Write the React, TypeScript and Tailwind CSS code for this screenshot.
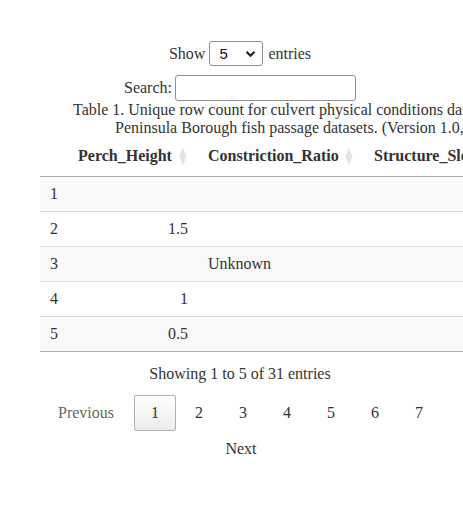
import React from "react";

const SortIcon = () => (
  <svg width="8" height="19" viewBox="0 0 8 19" className="shrink-0">
    <path d="M4 0.5 L7.5 9.5 L4 18.5 L0.5 9.5 Z" fill="#e4e4e4" />
  </svg>
);

const rows: { i: string; ph: string; cr: string }[] = [
  { i: "1", ph: "", cr: "" },
  { i: "2", ph: "1.5", cr: "" },
  { i: "3", ph: "", cr: "Unknown" },
  { i: "4", ph: "1", cr: "" },
  { i: "5", ph: "0.5", cr: "" },
];

export default function App() {
  return (
    <div
      className="w-full h-[506px] overflow-hidden bg-white text-[16px] text-[#333] leading-[18px]"
      style={{ fontFamily: '"Liberation Serif", "Times New Roman", serif' }}
    >
      <div className="w-[440px] ml-[20px]">
        {/* Show entries */}
        <div className="mt-[41px] h-[25px] flex items-center justify-center">
          <span>Show</span>
          <div className="ml-[4px] w-[54px] h-[25px] border border-[#8f8f8f] rounded-[3px] flex items-center justify-between pl-[9px] pr-[6px]">
            <span
              className="text-[15px] text-[#111]"
              style={{ fontFamily: '"Liberation Sans", Arial, sans-serif' }}
            >
              5
            </span>
            <svg width="11" height="8" viewBox="0 0 11 8">
              <path d="M1.5 1.8 L5.5 5.8 L9.5 1.8" stroke="#222" strokeWidth="2.2" fill="none" />
            </svg>
          </div>
          <span className="ml-[5px]">entries</span>
        </div>
        {/* Search */}
        <div className="mt-[9px] h-[26px] flex items-center justify-center">
          <span>Search:</span>
          <div className="ml-[3px] w-[181px] h-[26px] border border-[#8f8f8f] rounded-[3px] bg-white" />
        </div>
      </div>
      {/* Caption */}
      <div className="whitespace-nowrap">
        <div className="ml-[73px] h-[18px]">
          Table 1. Unique row count for culvert physical conditions data from the Kenai
        </div>
        <div className="ml-[115px] h-[18px]">
          Peninsula Borough fish passage datasets. (Version 1.0, 2023)
        </div>
      </div>
      {/* Table */}
      <div className="pl-[40px] whitespace-nowrap">
        <table className="border-collapse table-fixed w-[700px]">
          <colgroup>
            <col className="w-[28px]" />
            <col className="w-[130px]" />
            <col className="w-[166px]" />
            <col className="w-[190px]" />
            <col className="w-[186px]" />
          </colgroup>
          <thead>
            <tr className="border-b border-[#aaaaaa]">
              <th className="h-[39px] p-0"></th>
              <th className="h-[39px] pl-[10px] pr-[11px] text-left font-bold">
                <div className="flex items-center justify-between">
                  <span>Perch_Height</span>
                  <SortIcon />
                </div>
              </th>
              <th className="h-[39px] pl-[10px] pr-[11px] text-left font-bold">
                <div className="flex items-center justify-between">
                  <span>Constriction_Ratio</span>
                  <SortIcon />
                </div>
              </th>
              <th className="h-[39px] pl-[10px] pr-[11px] text-left font-bold">
                <div className="flex items-center justify-between">
                  <span>Structure_Slope</span>
                  <SortIcon />
                </div>
              </th>
              <th className="h-[39px] pl-[10px] pr-[11px] text-left font-bold">
                <div className="flex items-center justify-between">
                  <span>Structure_Length</span>
                  <SortIcon />
                </div>
              </th>
            </tr>
          </thead>
          <tbody>
            {rows.map((r, idx) => (
              <tr
                key={r.i}
                className={
                  (idx % 2 === 0 ? "bg-[#f9f9f9] " : "bg-white ") +
                  (idx === rows.length - 1 ? "border-b border-[#b5b5b5]" : "border-b border-[#dddddd]")
                }
              >
                <td className="h-[35px] pl-[10px] p-0">{r.i}</td>
                <td className="h-[35px] px-[10px] text-right">{r.ph}</td>
                <td className="h-[35px] px-[10px] text-left">{r.cr}</td>
                <td className="h-[35px] px-[10px]"></td>
                <td className="h-[35px] px-[10px]"></td>
              </tr>
            ))}
          </tbody>
        </table>
      </div>
      {/* Info and pagination */}
      <div className="w-[440px] ml-[20px]">
        <div className="mt-[13px] text-center h-[18px]">Showing 1 to 5 of 31 entries</div>
      </div>
      <div className="w-[440px] ml-[21px]">
        <div className="mt-[12px] flex flex-wrap justify-center gap-x-[2px]">
          <span className="h-[36px] pl-[16px] pr-[18px] flex items-center text-[#666]">Previous</span>
          <span className="h-[36px] w-[42px] flex items-center justify-center border border-[#b0b0b0] rounded-[2px] bg-gradient-to-b from-white to-[#ececec]">
            1
          </span>
          {["2", "3", "4", "5", "6", "7"].map((n) => (
            <span key={n} className="h-[36px] w-[42px] flex items-center justify-center">
              {n}
            </span>
          ))}
          <span className="h-[36px] px-[16px] flex items-center">Next</span>
        </div>
      </div>
    </div>
  );
}
